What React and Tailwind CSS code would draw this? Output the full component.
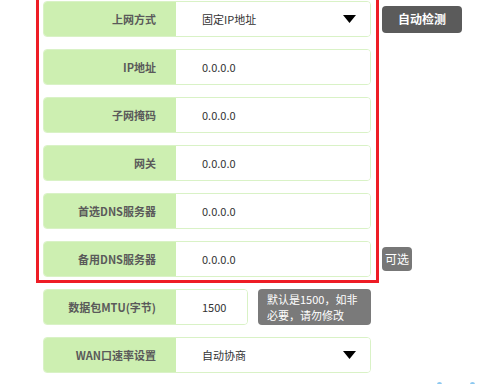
const font = { fontFamily: '"Noto Sans CJK SC", "Liberation Sans", sans-serif' };

const rows = [
  { label: '上网方式', value: '固定IP地址', select: true, aside: 'detect' },
  { label: 'IP地址', value: '0.0.0.0' },
  { label: '子网掩码', value: '0.0.0.0' },
  { label: '网关', value: '0.0.0.0' },
  { label: '首选DNS服务器', value: '0.0.0.0' },
  { label: '备用DNS服务器', value: '0.0.0.0', aside: 'optional' },
  { label: '数据包MTU(字节)', value: '1500', narrow: true, aside: 'mtu' },
  { label: 'WAN口速率设置', value: '自动协商', select: true },
];

function Aside({ kind }) {
  if (kind === 'detect')
    return (
      <button className="ml-[11px] w-[80px] h-[27px] rounded-[4px] bg-[#5b5b5b] text-white text-[12px] font-bold">
        自动检测
      </button>
    );
  if (kind === 'optional')
    return (
      <span className="ml-[11px] w-[30px] h-[24px] rounded-[4px] bg-[#777] text-white text-[12px] flex items-center justify-center">
        可选
      </span>
    );
  if (kind === 'mtu')
    return (
      <div className="ml-[10px] w-[113px] h-[36px] rounded-[4px] bg-[#7a7a7a] text-white text-[11px] leading-[16px] pl-[9px] pt-[2px]">
        <div>默认是1500，如非</div>
        <div>必要，请勿修改</div>
      </div>
    );
  return null;
}

function Row({ label, value, select, narrow, aside }) {
  return (
    <div className="flex items-center h-[36px]">
      <div
        className={`${narrow ? 'w-[205px]' : 'w-[328px]'} h-full flex rounded-[4px] border border-[#d9f2c6] overflow-hidden`}
      >
        <div className="w-[132px] shrink-0 bg-[#cdefb1] flex items-center justify-end pr-[20px] text-[11px] font-bold text-[#5a5a5a]">
          {label}
        </div>
        <div className="flex-1 bg-white flex items-center pl-[26px] pr-[14px] text-[11px] text-[#333]">
          <span className="flex-1">{value}</span>
          {select && (
            <svg width="13" height="8" viewBox="0 0 13 8">
              <path d="M0 0H13L6.5 8Z" fill="#000" />
            </svg>
          )}
        </div>
      </div>
      <Aside kind={aside} />
    </div>
  );
}

export default function App() {
  return (
    <div className="relative w-[500px] h-[384px] bg-white overflow-hidden" style={font}>
      <div className="flex flex-col gap-[12px] pl-[43px] pt-[1px]">
        {rows.map((r) => (
          <Row key={r.label} {...r} />
        ))}
      </div>
      {/* red highlight frame over the WAN fields */}
      <div className="absolute left-[36px] top-[-10px] w-[343px] h-[293px] border-[3px] border-[#ee1c25] pointer-events-none" />
      <span className="absolute left-[437px] top-[382px] w-[5px] h-[3px] rounded-t bg-[#8cc8f0]" />
      <span className="absolute left-[470px] top-[382px] w-[5px] h-[3px] rounded-t bg-[#8cc8f0]" />
    </div>
  );
}
